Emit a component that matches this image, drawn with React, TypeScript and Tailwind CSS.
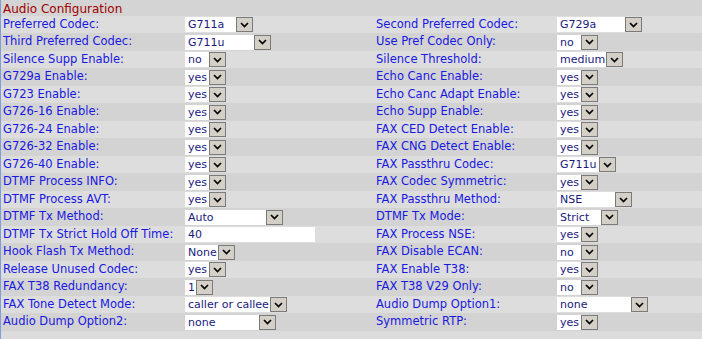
import React from "react";

type Cell = { label: string; value: string; w: number; input?: boolean };

const rows: [Cell, Cell | null][] = [
  [
    { label: "Preferred Codec:", value: "G711a", w: 68 },
    { label: "Second Preferred Codec:", value: "G729a", w: 85 },
  ],
  [
    { label: "Third Preferred Codec:", value: "G711u", w: 86 },
    { label: "Use Pref Codec Only:", value: "no", w: 41 },
  ],
  [
    { label: "Silence Supp Enable:", value: "no", w: 41 },
    { label: "Silence Threshold:", value: "medium", w: 66 },
  ],
  [
    { label: "G729a Enable:", value: "yes", w: 41 },
    { label: "Echo Canc Enable:", value: "yes", w: 41 },
  ],
  [
    { label: "G723 Enable:", value: "yes", w: 41 },
    { label: "Echo Canc Adapt Enable:", value: "yes", w: 41 },
  ],
  [
    { label: "G726-16 Enable:", value: "yes", w: 41 },
    { label: "Echo Supp Enable:", value: "yes", w: 41 },
  ],
  [
    { label: "G726-24 Enable:", value: "yes", w: 41 },
    { label: "FAX CED Detect Enable:", value: "yes", w: 41 },
  ],
  [
    { label: "G726-32 Enable:", value: "yes", w: 41 },
    { label: "FAX CNG Detect Enable:", value: "yes", w: 41 },
  ],
  [
    { label: "G726-40 Enable:", value: "yes", w: 41 },
    { label: "FAX Passthru Codec:", value: "G711u", w: 59 },
  ],
  [
    { label: "DTMF Process INFO:", value: "yes", w: 41 },
    { label: "FAX Codec Symmetric:", value: "yes", w: 41 },
  ],
  [
    { label: "DTMF Process AVT:", value: "yes", w: 41 },
    { label: "FAX Passthru Method:", value: "NSE", w: 75 },
  ],
  [
    { label: "DTMF Tx Method:", value: "Auto", w: 98 },
    { label: "DTMF Tx Mode:", value: "Strict", w: 61 },
  ],
  [
    { label: "DTMF Tx Strict Hold Off Time:", value: "40", w: 130, input: true },
    { label: "FAX Process NSE:", value: "yes", w: 41 },
  ],
  [
    { label: "Hook Flash Tx Method:", value: "None", w: 50 },
    { label: "FAX Disable ECAN:", value: "no", w: 41 },
  ],
  [
    { label: "Release Unused Codec:", value: "yes", w: 41 },
    { label: "FAX Enable T38:", value: "yes", w: 41 },
  ],
  [
    { label: "FAX T38 Redundancy:", value: "1", w: 28 },
    { label: "FAX T38 V29 Only:", value: "no", w: 41 },
  ],
  [
    { label: "FAX Tone Detect Mode:", value: "caller or callee", w: 102 },
    { label: "Audio Dump Option1:", value: "none", w: 91 },
  ],
  [
    { label: "Audio Dump Option2:", value: "none", w: 91 },
    { label: "Symmetric RTP:", value: "yes", w: 41 },
  ],
];

function Chevron() {
  return (
    <div className="flex h-[15px] w-[17px] shrink-0 items-center justify-center border border-[#7a7a7a] bg-[#d4d0c8]">
      <svg width="9" height="6" viewBox="0 0 9 6">
        <polyline points="1,1 4.5,4.5 8,1" fill="none" stroke="#000" strokeWidth="1.7" />
      </svg>
    </div>
  );
}

function Field({ c }: { c: Cell }) {
  if (c.input) {
    return (
      <div
        className="flex h-[15px] items-center bg-white pl-[3px] text-[11px] text-[#1a1a80]"
        style={{ width: c.w }}
      >
        {c.value}
      </div>
    );
  }
  return (
    <div className="flex h-[15px] bg-white" style={{ width: c.w }}>
      <div className="flex flex-1 items-center overflow-hidden whitespace-nowrap pl-[3px] text-[11px] text-[#1a1a80]">
        {c.value}
      </div>
      <Chevron />
    </div>
  );
}

export default function App() {
  return (
    <div className="h-[339px] w-[702px] overflow-hidden border-l border-[#7f9ed6] bg-[#dcdcdc] font-['DejaVu_Sans',sans-serif] text-[11.5px] leading-none">
      <div className="flex h-[16px] items-center bg-[#d4d4d4] pl-[2px] pt-[1px] text-[12px] text-[#a00000]">
        Audio Configuration
      </div>
      {rows.map(([a, b], i) => (
        <div
          key={i}
          className={`grid grid-cols-[184px_189px_183px_1fr] items-center ${
            i % 2 === 0 ? "h-[17px] bg-[#dddddd]" : "h-[18px] bg-[#d3d3d3]"
          }`}
        >
          <div className="whitespace-nowrap pl-[2px] text-[#1818e0]">{a.label}</div>
          <div>
            <Field c={a} />
          </div>
          <div className="whitespace-nowrap pl-[2px] text-[#1818e0]">{b?.label}</div>
          <div>{b && <Field c={b} />}</div>
        </div>
      ))}
    </div>
  );
}
